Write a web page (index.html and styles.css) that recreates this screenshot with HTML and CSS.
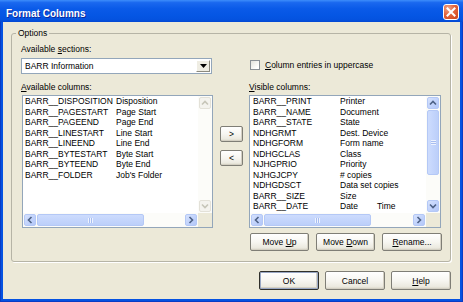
FILE: index.html
```html
<!DOCTYPE html>
<html>
<head>
  <meta charset="utf-8">
  <title>Format Columns</title>
  <link rel="stylesheet" href="styles.css">
</head>
<body>
<div class="window">
  <div class="titlebar">
    <span class="title">Format Columns</span>
    <span class="close">
      <svg width="14" height="14" viewBox="0 0 14 14"><path d="M3.5 3.5L10.5 10.5M10.5 3.5L3.5 10.5" stroke="#fff" stroke-width="2" stroke-linecap="square"/></svg>
    </span>
  </div>
  <div class="client">
    <fieldset class="options">
      <legend>Options</legend>
      <div class="cols">
        <div class="col col-left">
          <div class="label">Available <u>s</u>ections:</div>
          <div class="combo">
            <span class="combo-text">BARR Information</span>
            <span class="combo-btn"><svg width="7" height="4" viewBox="0 0 7 4"><path d="M0 0H7L3.5 4Z" fill="#000"/></svg></span>
          </div>
          <div class="label label-list"><u>A</u>vailable columns:</div>
          <div class="listbox listbox-left">
            <div class="list-view">
              <div class="row"><span class="c1">BARR__DISPOSITION</span><span>Disposition</span></div>
              <div class="row"><span class="c1">BARR__PAGESTART</span><span>Page Start</span></div>
              <div class="row"><span class="c1">BARR__PAGEEND</span><span>Page End</span></div>
              <div class="row"><span class="c1">BARR__LINESTART</span><span>Line Start</span></div>
              <div class="row"><span class="c1">BARR__LINEEND</span><span>Line End</span></div>
              <div class="row"><span class="c1">BARR__BYTESTART</span><span>Byte Start</span></div>
              <div class="row"><span class="c1">BARR__BYTEEND</span><span>Byte End</span></div>
              <div class="row"><span class="c1">BARR__FOLDER</span><span>Job's Folder</span></div>
            </div>
            <div class="vscroll disabled">
              <span class="sb-btn"><svg width="12" height="12" viewBox="0 0 12 12"><path d="M3 7.5L6 4.5L9 7.5" /></svg></span>
              <span class="sb-track"></span>
              <span class="sb-btn"><svg width="12" height="12" viewBox="0 0 12 12"><path d="M3 4.5L6 7.5L9 4.5" /></svg></span>
            </div>
            <div class="hscroll">
              <span class="sb-btn"><svg width="12" height="12" viewBox="0 0 12 12"><path d="M7.5 3L4.5 6L7.5 9" /></svg></span>
              <span class="sb-thumb h-thumb"><span class="grip-v"></span></span>
              <span class="sb-track"></span>
              <span class="sb-btn"><svg width="12" height="12" viewBox="0 0 12 12"><path d="M4.5 3L7.5 6L4.5 9" /></svg></span>
            </div>
            <div class="corner"></div>
          </div>
        </div>

        <div class="col col-mid">
          <button class="btn btn-move"><span>&gt;</span></button>
          <button class="btn btn-move"><span>&lt;</span></button>
        </div>

        <div class="col col-right">
          <label class="check-row">
            <span class="checkbox"></span>
            <span><u>C</u>olumn entries in uppercase</span>
          </label>
          <div class="label label-list"><u>V</u>isible columns:</div>
          <div class="listbox listbox-right">
            <div class="list-view">
              <div class="row"><span class="c1">BARR__PRINT</span><span>Printer</span></div>
              <div class="row"><span class="c1">BARR__NAME</span><span>Document</span></div>
              <div class="row"><span class="c1">BARR__STATE</span><span>State</span></div>
              <div class="row"><span class="c1">NDHGRMT</span><span>Dest. Device</span></div>
              <div class="row"><span class="c1">NDHGFORM</span><span>Form name</span></div>
              <div class="row"><span class="c1">NDHGCLAS</span><span>Class</span></div>
              <div class="row"><span class="c1">NJHGPRIO</span><span>Priority</span></div>
              <div class="row"><span class="c1">NJHGJCPY</span><span># copies</span></div>
              <div class="row"><span class="c1">NDHGDSCT</span><span>Data set copies</span></div>
              <div class="row"><span class="c1">BARR__SIZE</span><span>Size</span></div>
              <div class="row"><span class="c1">BARR__DATE</span><span>Date<span class="tab">Time</span></span></div>
              <div class="row"><span class="c1">NDHGSEQ</span><span>SEQ</span></div>
            </div>
            <div class="vscroll">
              <span class="sb-btn"><svg width="12" height="12" viewBox="0 0 12 12"><path d="M3 7.5L6 4.5L9 7.5" /></svg></span>
              <span class="sb-thumb v-thumb"><span class="grip-h"></span></span>
              <span class="sb-track"></span>
              <span class="sb-btn"><svg width="12" height="12" viewBox="0 0 12 12"><path d="M3 4.5L6 7.5L9 4.5" /></svg></span>
            </div>
            <div class="hscroll">
              <span class="sb-btn"><svg width="12" height="12" viewBox="0 0 12 12"><path d="M7.5 3L4.5 6L7.5 9" /></svg></span>
              <span class="sb-thumb h-thumb"><span class="grip-v"></span></span>
              <span class="sb-track"></span>
              <span class="sb-btn"><svg width="12" height="12" viewBox="0 0 12 12"><path d="M4.5 3L7.5 6L4.5 9" /></svg></span>
            </div>
            <div class="corner"></div>
          </div>
          <div class="move-buttons">
            <button class="btn btn-up"><span>Move <u>U</u>p</span></button>
            <button class="btn btn-down"><span>Move <u>D</u>own</span></button>
            <button class="btn btn-rename"><span><u>R</u>ename...</span></button>
          </div>
        </div>
      </div>
    </fieldset>

    <div class="dialog-buttons">
      <button class="btn btn-dialog btn-default"><span>OK</span></button>
      <button class="btn btn-dialog"><span>Cancel</span></button>
      <button class="btn btn-dialog"><span><u>H</u>elp</span></button>
    </div>
  </div>
</div>
</body>
</html>
```

FILE: styles.css
```css
* {
  box-sizing: border-box;
}

body {
  margin: 0;
  font-family: "Liberation Sans", Arial, sans-serif;
  font-size: 8.5px;
  color: #000;
}

u {
  text-decoration: underline;
  text-underline-offset: 1px;
}

/* window frame */
.window {
  width: 463px;
  height: 302px;
  display: flex;
  flex-direction: column;
  background: #0552e1;
  box-shadow: inset 1px 0 0 #0a3cc4, inset -1px 0 0 #0a3cc4, inset 0 -1px 0 #0a3cc4;
}

.titlebar {
  height: 22px;
  flex: none;
  display: flex;
  align-items: center;
  padding: 2px 4px 0 6px;
  background: linear-gradient(to bottom, #3d8dfb 0%, #1a68ef 12%, #0a5ae8 40%, #0556e4 70%, #0452df 90%, #0448d2 100%);
}

.title {
  margin-top: 3px;
  line-height: 12px;
  font-size: 10px;
  font-weight: bold;
  color: #fff;
  text-shadow: 1px 1px 0 #0b2a9c;
}

.close {
  margin-left: auto;
  width: 16px;
  height: 16px;
  display: flex;
  align-items: center;
  justify-content: center;
  border: 1px solid #fff;
  border-radius: 3px;
  background: radial-gradient(circle at 30% 25%, #f1a68a 0%, #e2643c 45%, #cc4318 100%);
}

.client {
  flex: 1;
  margin: 0 3px 3px;
  background: #ece9d8;
  display: flex;
  flex-direction: column;
}

/* group box */
.options {
  margin: 6px 9px 0 8px;
  padding: 6px 3px 10px 4px;
  border: 1px solid #b6b4a6;
  border-radius: 3px;
  box-shadow: 1px 1px 0 #fff;
}

.options legend {
  padding: 0 2px;
  line-height: 10px;
}

.cols {
  display: flex;
  margin-left: 5px;
}

.col {
  display: flex;
  flex-direction: column;
}

.col-left {
  width: 192px;
}

.col-mid {
  width: 23px;
  margin-left: 7px;
  padding-top: 82px;
  gap: 8px;
}

.col-right {
  width: 193px;
  margin-left: 6px;
}

.label {
  line-height: 11px;
  height: 11px;
}

.label-list {
  margin-top: 11px;
}

.col-left .label-list {
  margin-top: 8px;
}

/* combo box */
.combo {
  margin-top: 3px;
  height: 16px;
  width: 191px;
  display: flex;
  align-items: center;
  background: #fff;
  border: 1px solid #93a6ba;
}

.combo-text {
  padding-left: 3px;
  flex: 1;
}

.combo-btn {
  width: 14px;
  height: 12px;
  margin-right: 1px;
  display: flex;
  align-items: center;
  justify-content: center;
  background: #efede3;
  border: 1px solid;
  border-color: #fff #8c8a7e #8c8a7e #fff;
}

/* checkbox */
.check-row {
  margin-top: 14px;
  height: 13px;
  display: flex;
  align-items: center;
  gap: 5px;
  padding-left: 1px;
}

.checkbox {
  width: 10px;
  height: 10px;
  border: 1px solid #8a9096;
  background: linear-gradient(135deg, #e2e2dc 0%, #fff 80%);
}

/* list boxes */
.listbox {
  margin-top: 2px;
  height: 133px;
  display: grid;
  grid-template-rows: 1fr 14px;
  background: #fff;
  border: 1px solid #93a6ba;
}

.listbox-left {
  width: 191px;
  margin-left: 1px;
  grid-template-columns: 175px 14px;
}

.listbox-right {
  width: 192px;
  grid-template-columns: 176px 14px;
}

.list-view {
  overflow: hidden;
  padding-left: 2px;
}

.listbox-right .list-view {
  padding-left: 3px;
}

.row {
  display: flex;
  white-space: nowrap;
  line-height: 10.5px;
  height: 10.5px;
}

.listbox-left .c1 {
  width: 91px;
  flex: none;
}

.listbox-right .c1 {
  width: 87px;
  flex: none;
}

.tab {
  margin-left: 19px;
}

/* scroll bars */
.vscroll,
.hscroll {
  display: flex;
  padding: 1px;
  background: #fcfcf9;
}

.vscroll {
  flex-direction: column;
}

.corner {
  background: #ece9d8;
}

.sb-btn {
  width: 12px;
  height: 12px;
  flex: none;
  border: 1px solid #b4c8f6;
  border-radius: 2px;
  background: linear-gradient(135deg, #d6e2fd 0%, #bfd1fb 60%, #b3c7f8 100%);
}

.sb-btn svg {
  display: block;
  margin: -1px;
  fill: none;
  stroke: #4d6185;
  stroke-width: 1.6;
}

.sb-track {
  flex: 1;
}

.sb-thumb {
  flex: none;
  display: flex;
  align-items: center;
  justify-content: center;
  border: 1px solid #b4c8f6;
  border-radius: 2px;
  background: linear-gradient(to right, #cddcfd 0%, #c4d5fc 50%, #bccff9 100%);
}

.h-thumb {
  width: 107px;
  margin-left: 1px;
  background: linear-gradient(to bottom, #cddcfd 0%, #c4d5fc 50%, #bccff9 100%);
}

.v-thumb {
  height: 65px;
  margin-top: 1px;
}

.grip-h {
  width: 5px;
  height: 5px;
  background: repeating-linear-gradient(to bottom, #eef3fe 0 1px, #a8bdf0 1px 2px);
}

.grip-v {
  width: 5px;
  height: 5px;
  background: repeating-linear-gradient(to right, #eef3fe 0 1px, #a8bdf0 1px 2px);
}

.disabled .sb-btn {
  border-color: #e3e1d8;
  background: #f4f3ee;
}

.disabled .sb-btn svg {
  stroke: #c6c5b8;
}

/* buttons */
.btn {
  font: inherit;
  color: #000;
  padding: 0;
  display: flex;
  align-items: center;
  justify-content: center;
  white-space: nowrap;
  border: 1px solid #7f7e76;
  border-radius: 2px;
  background: linear-gradient(to bottom, #fff 0%, #f7f6f1 50%, #eceae0 85%, #d8d4c6 100%);
  box-shadow: inset -1px -1px 0 #d4d0c3;
}

.btn-move {
  width: 23px;
  height: 16px;
}

.move-buttons {
  margin-top: 5px;
  display: flex;
  justify-content: flex-end;
  gap: 7px;
}

.btn-up,
.btn-down {
  width: 59px;
  height: 18px;
}

.btn-rename {
  width: 60px;
  height: 18px;
}

.dialog-buttons {
  margin-top: 9px;
  padding-right: 9px;
  display: flex;
  justify-content: flex-end;
  gap: 6px;
}

.btn-dialog {
  width: 60px;
  height: 19px;
}

.btn-default {
  border-color: #2f2f2a;
  box-shadow: inset 0 0 0 1px #9aa8c4, inset -1px -1px 0 1px #d4d0c3;
}
```
